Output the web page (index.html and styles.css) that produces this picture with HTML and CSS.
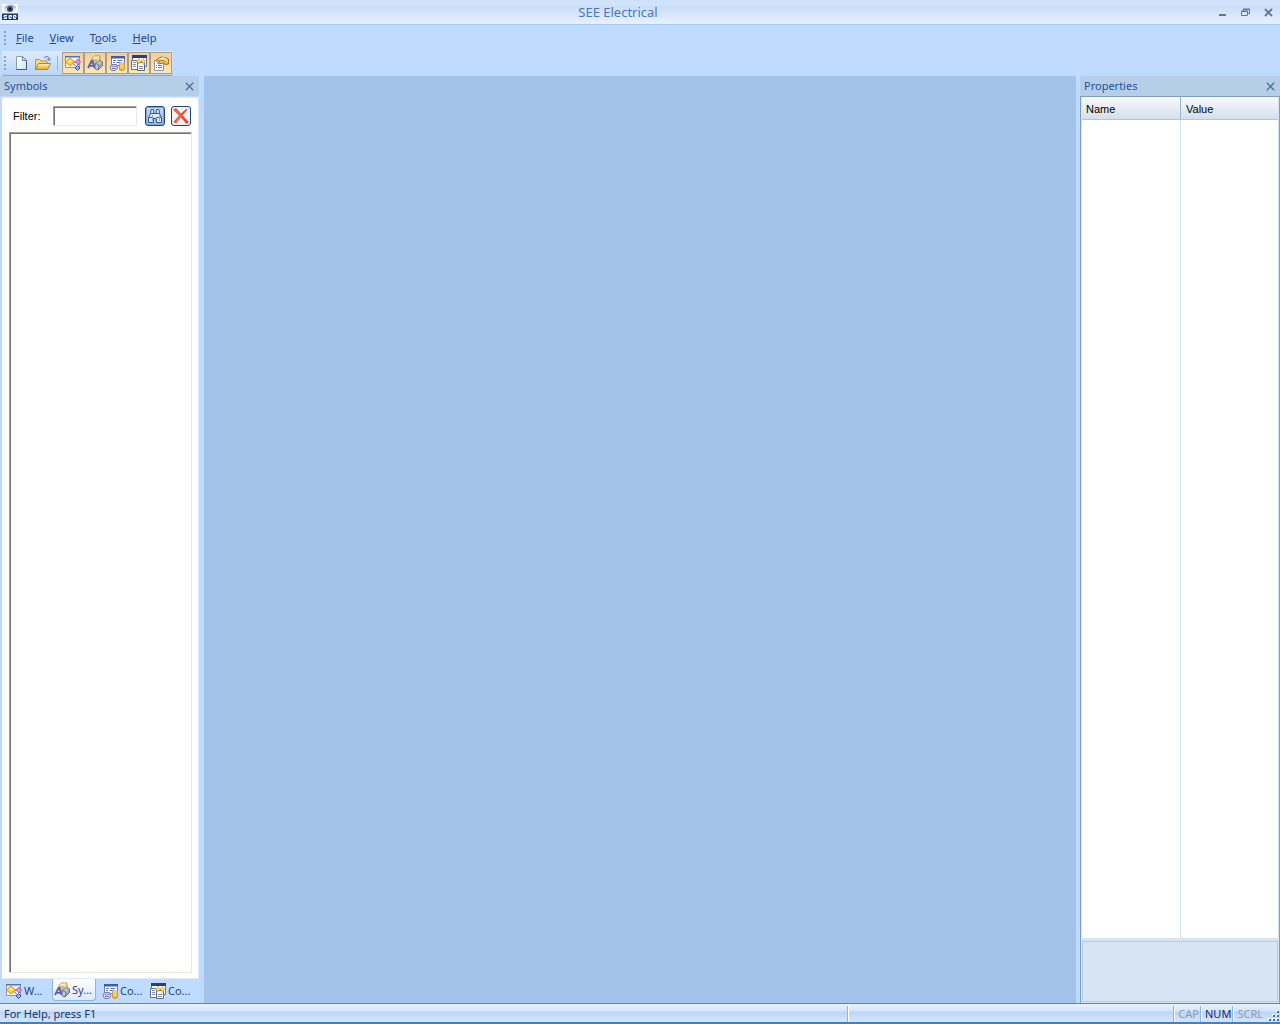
FILE: index.html
```html
<!DOCTYPE html>
<html lang="en">
<head>
<meta charset="utf-8">
<title>SEE Electrical</title>
<link rel="stylesheet" href="styles.css">
</head>
<body>
<svg class="sprite" aria-hidden="true">
  <defs>
    <linearGradient id="gold" x1="0" y1="0" x2="0" y2="1"><stop offset="0" stop-color="#fff3b0"/><stop offset="1" stop-color="#e5a92c"/></linearGradient>
    <linearGradient id="steel" x1="0" y1="0" x2="1" y2="1"><stop offset="0" stop-color="#f4f6fa"/><stop offset="1" stop-color="#6b7794"/></linearGradient>
    <linearGradient id="page" x1="0" y1="0" x2="1" y2="1"><stop offset="0" stop-color="#fff"/><stop offset="1" stop-color="#d5e2f5"/></linearGradient>
  </defs>
  <symbol id="i-workspace" viewBox="0 0 16 16">
    <path d="M.5 1.500h14v11H.5z" fill="#eef2fb" stroke="#8b98b5"/>
    <path d="M0 1h15v1.500H0z" fill="#5b75ab"/>
    <path d="M5 3 9.500 7 5 11 .5 7z" fill="#ffd235" stroke="#cf961f"/>
    <path d="M5 4.500 7.500 7H2.500z" fill="#fff0a0"/>
    <path d="M9 7h2M8 8.500l3 3" stroke="#52648f" fill="none"/>
    <path d="m13 4 2.500 3L13 10l-2.500-3z" fill="#ee8bea" stroke="#b05ab8"/>
    <path d="m12.500 10.500 2.500 2.500-2.500 2.500L10 13z" fill="#8cb3fa" stroke="#3a59b5"/>
  </symbol>
  <symbol id="i-symbols" viewBox="0 0 16 16">
    <path d="M5 3.500 7.500 1H13v5l-2.500 3H5z" fill="#efd98f" stroke="#a9924f"/>
    <path d="M5.500 4h5v4.500h-5z" fill="#cfbc83"/>
    <path d="M5.500 3.500 7.500 1.500h5l-2 2z" fill="#fff1b5"/>
    <path d="m8 9 4.500-3.500 3 1.500v3.500L11 15l-3-2z" fill="url(#steel)" stroke="#69748c"/>
    <ellipse cx="9.800" cy="11.800" rx="2" ry="3" fill="#c3cbd9" stroke="#6c778e"/>
    <path d="M1 13 4.500 6h1L7.500 13M2.500 10.800h4.300" fill="none" stroke="#5a5fb4" stroke-width="1.800"/>
  </symbol>
  <symbol id="i-commands" viewBox="0 0 16 16">
    <path d="M2.500 1.500h13v9h-13z" fill="#fff" stroke="#6e7fa9"/>
    <path d="M2 1h14v2.500H2z" fill="#3f5ea8"/>
    <path d="M4 5.500h3M8.500 5.500h5M4 7.500h2M7.500 7.500h4" stroke="#5576b5"/>
    <path d="M2.500 9.500h5l1 4-2 2h-4L1 12.500z" fill="#d3def6" stroke="#6a80b3"/>
    <path d="M3 11.500h4M3 13.500h4" stroke="#6a80b3"/>
    <path d="m4 9.500 2 2-2 2-2-2z" fill="#e394e0"/>
    <path d="M10.500 9v5c0 2 5 2 5 0V9z" fill="url(#gold)" stroke="#cf9630"/>
    <ellipse cx="13" cy="9" rx="2.500" ry="1.200" fill="#fff1a8" stroke="#d9a843"/>
  </symbol>
  <symbol id="i-components" viewBox="0 0 16 16">
    <path d="M1.500 1.500h14v10h-14z" fill="#fff" stroke="#6274a3"/>
    <path d="M1 0h15v3H1z" fill="#263d8d"/>
    <path d="M.5 5.500h6v9h-6z" fill="#fff" stroke="#5c7099"/>
    <path d="M2 7.500h3M2 9.500h3M2 11.500h3" stroke="#7c8fb0"/>
    <path d="M6.500 7.500h7v8h-7z" fill="#fdf8e2" stroke="#5c6789"/>
    <path d="M8 11.500h4M8 13.500h4" stroke="#7e8ba4"/>
    <path d="m8 3 1 2.500 2 .5-2 1-1 2-1-2-2-1 2-.5zM12.500 3l1 2.500 2 .5-2 1-1 2.500-1-2.500-2-1 2-.5z" fill="#ffe36c" stroke="#d7a526" stroke-width=".6"/>
  </symbol>
  <symbol id="i-properties" viewBox="0 0 16 16">
    <path d="M1.500 5.500h9v10h-9z" fill="#fff" stroke="#8a97b0"/>
    <path d="M3 10.500h1M5 10.500h4M3 12.500h1M5 12.500h4" stroke="#667fae"/>
    <path d="M2.500 5.500 8 2l4 .5L15.500 4v5l-3 .5L10 8 6 9 4.500 8 7 6H3z" fill="url(#gold)" stroke="#8f7233"/>
    <path d="M7 5.500h4l2 2" stroke="#a88433" fill="none"/>
    <path d="M8 3h4" stroke="#fff6c8"/>
  </symbol>
  <symbol id="i-close" viewBox="0 0 9 9"><path d="m.8.8 7.400 7.400M8.200.8.8 8.200" fill="none" stroke="currentColor" stroke-width="1.300"/></symbol>
</svg>

<header class="titlebar">
  <svg class="icon" viewBox="0 0 16 16" aria-hidden="true">
    <path d="M0 0h16v16H0z" fill="#f4f8fd"/>
    <path d="M2 4c2-4 10-5 12 0l-2 1-8 1z" fill="#a7b5cb"/>
    <path d="M2 6c2-3 8-5 12-1-2 4-9 5-12 1z" fill="#e6dce0"/>
    <circle cx="8" cy="5" r="3" fill="#3e5578"/><circle cx="8" cy="5" r="1.500" fill="#111c36"/>
    <path d="M0 9.500h16V16H0z" fill="#133d70"/>
    <path d="M5 11.500H2v1.500h2.500v1.500H1.500M9.500 14.500H7v-3h2.500v1.500H7M14 14.500h-2.500v-3H14v1.500h-2.500" fill="none" stroke="#fff"/>
  </svg>
  <h1>SEE Electrical</h1>
  <div class="window-buttons">
    <button aria-label="Minimize"><svg width="9" height="9" viewBox="0 0 9 9"><path d="M1 6h7v2H1z" fill="#66758d"/></svg></button>
    <button aria-label="Restore"><svg width="9" height="9" viewBox="0 0 9 9"><path d="M2.500 3V1.500h6v4H7M.5 3.500h6v4h-6zM2 1h7M0 3h7" fill="none" stroke="#66758d"/></svg></button>
    <button aria-label="Close"><svg width="9" height="9" viewBox="0 0 9 9"><path d="m1 1 7 7M8 1 1 8" stroke="#66758d" stroke-width="1.800"/></svg></button>
  </div>
</header>

<nav class="menubar" aria-label="Main menu">
  <span class="grip"></span>
  <button><u>F</u>ile</button>
  <button><u>V</u>iew</button>
  <button>T<u>o</u>ols</button>
  <button><u>H</u>elp</button>
</nav>

<div class="toolbar-row">
  <div class="toolbar" role="toolbar" aria-label="Standard">
    <span class="grip"></span>
    <button class="tool" aria-label="New"><svg class="icon" viewBox="0 0 16 16"><path d="M3.500 1.500h6l4 4v9h-10z" fill="url(#page)" stroke="#8b9ab6"/><path d="M13.500 5.500v9h-10" fill="none" stroke="#43557d"/><path d="M9.500 1.500v4h4z" fill="#dbe5f5" stroke="#6d7fa3"/></svg></button>
    <button class="tool" aria-label="Open"><svg class="icon" viewBox="0 0 16 16"><path d="M.5 14.500v-10h4l1.500 1.500h6v8z" fill="#f9da75" stroke="#b8954a"/><path d="m.5 14.500 3-6h12l-3 6z" fill="url(#gold)" stroke="#b08634"/><path d="M9 3c2-2 4-2 5 0v2m-2-1.500 2 2 1.500-2" fill="none" stroke="#5470a0"/></svg></button>
    <span class="separator"></span>
    <button class="tool on" aria-label="Workspace" aria-pressed="true"><svg class="icon"><use href="#i-workspace"/></svg></button>
    <button class="tool on" aria-label="Symbols" aria-pressed="true"><svg class="icon"><use href="#i-symbols"/></svg></button>
    <button class="tool on" aria-label="Commands" aria-pressed="true"><svg class="icon"><use href="#i-commands"/></svg></button>
    <button class="tool on" aria-label="Components" aria-pressed="true"><svg class="icon"><use href="#i-components"/></svg></button>
    <button class="tool on" aria-label="Properties" aria-pressed="true"><svg class="icon"><use href="#i-properties"/></svg></button>
  </div>
</div>

<div class="workarea">
  <aside class="symbols">
    <div class="panel-title"><h2>Symbols</h2><button aria-label="Close Symbols"><svg width="9" height="9"><use href="#i-close"/></svg></button></div>
    <div class="symbols-body">
      <form class="filter">
        <label for="filter">Filter:</label>
        <input id="filter" type="text">
        <button type="button" class="find" aria-label="Find"><svg class="icon" viewBox="0 0 16 16"><path d="M4 1.500h2.500l.5 4h2l.5-4H12l.5 4 2 4v5H9.500v-4h-3v4h-5v-5l2-4z" fill="#dce8fa" stroke="#3d5a8e"/><path d="M3.500 5.500H7M9 5.500h3.500M2 9.500h4.500M9.500 9.500h5" stroke="#3d5a8e"/><path d="M5.500 7v6M12.500 7v6" stroke="#8ba6d2"/></svg></button>
        <button type="button" class="clear" aria-label="Clear"><svg class="icon" viewBox="0 0 16 16"><path d="M0 1.500 3 0l5 5.500L13 1l1.500.5L9.500 7.500 16 14l-2.500 2L8 9.500 3 15.500.5 14 6 7.500z" fill="#e84a32"/><path d="m2 1.500 6 6L2.500 14" fill="none" stroke="#f8917b"/></svg></button>
      </form>
      <div class="symbol-list" role="tree" aria-label="Symbols"></div>
    </div>
    <div class="tabs" role="tablist">
      <button role="tab"><svg class="icon"><use href="#i-workspace"/></svg><span>W...</span></button>
      <button role="tab" aria-selected="true"><svg class="icon"><use href="#i-symbols"/></svg><span>Sy...</span></button>
      <button role="tab"><svg class="icon"><use href="#i-commands"/></svg><span>Co...</span></button>
      <button role="tab"><svg class="icon"><use href="#i-components"/></svg><span>Co...</span></button>
    </div>
  </aside>

  <main class="canvas"></main>

  <aside class="properties">
    <div class="panel-title"><h2>Properties</h2><button aria-label="Close Properties"><svg width="9" height="9"><use href="#i-close"/></svg></button></div>
    <div class="property-body">
      <table>
        <thead><tr><th>Name</th><th>Value</th></tr></thead>
        <tbody><tr><td></td><td></td></tr></tbody>
      </table>
      <div class="description"></div>
    </div>
  </aside>
</div>

<footer class="statusbar">
  <span class="message">For Help, press F1</span>
  <span class="blank"></span>
  <span class="key">CAP</span>
  <span class="key num">NUM</span>
  <span class="key">SCRL</span>
  <svg class="resize" width="12" height="12" viewBox="0 0 12 12" aria-hidden="true"><path d="M8 0h2v2H8zM4 4h2v2H4zM8 4h2v2H8zM0 8h2v2H0zM4 8h2v2H4zM8 8h2v2H8z" fill="#fff"/><path d="M9 1h2v2H9zM5 5h2v2H5zM9 5h2v2H9zM1 9h2v2H1zM5 9h2v2H5zM9 9h2v2H9z" fill="#426eac"/></svg>
</footer>
</body>
</html>
```
FILE: styles.css
```css
* { box-sizing: border-box; }

body {
  margin: 0;
  height: 100vh;
  display: flex;
  flex-direction: column;
  overflow: hidden;
  background: #bfdbff;
  color: #24458a;
  font: 11px/16px "Noto Sans", "Open Sans", sans-serif;
}

button {
  margin: 0;
  padding: 0;
  border: 0;
  background: none;
  color: inherit;
  font: inherit;
}

svg { display: block; }
h1, h2 { margin: 0; font-size: 11px; font-weight: 400; }

.sprite { position: absolute; width: 0; height: 0; }
.icon { width: 16px; height: 16px; flex: none; }

/* Title and menus */
.titlebar {
  flex: none;
  height: 25px;
  display: flex;
  align-items: center;
  padding: 0 7px 0 2px;
  background: linear-gradient(#cfe2fb 0, #d3e4fa 5px, #cadef7 6px, #e6f0fd 23px);
  border-bottom: 1px solid #a7cbf0;
}
.titlebar h1 { flex: 1; font-size: 13px; text-align: center; color: #4a78b8; }
.window-buttons { display: flex; gap: 14px; }

.menubar {
  flex: none;
  height: 26px;
  display: flex;
  align-items: center;
  padding-left: 4px;
}
.menubar button { padding: 0 8px; }
.menubar .grip { margin-right: 2px; }

.grip {
  width: 2px;
  height: 14px;
  background: repeating-linear-gradient(#7da5db 0 2px, transparent 2px 4px);
}

.toolbar-row { flex: none; height: 25px; }
.toolbar {
  width: max-content;
  height: 25px;
  margin-left: 2px;
  padding: 0 1px 0 2px;
  display: flex;
  align-items: center;
  background: linear-gradient(#dceafc, #cbe0fb 50%, #bad5f8);
  border-bottom: 1px solid #7aa6dc;
  border-radius: 2px;
}
.tool { width: 22px; height: 22px; display: grid; place-items: center; }
.toolbar .grip { margin-right: 4px; }
.separator { width: 1px; height: 14px; margin: 0 4px 0 3px; background: #8fb5e5; }
.tool.on {
  border: 1px solid #a99e8c;
  background: linear-gradient(#f4cd9a, #fbd7a2 45%, #fde8b4);
}

/* Docked panels */
.workarea {
  flex: 1;
  min-height: 0;
  display: grid;
  grid-template-columns: 204px 1fr 204px;
}
.canvas { background: #a3c3ea; }

.panel-title {
  flex: none;
  height: 20px;
  display: flex;
  align-items: center;
  justify-content: space-between;
  padding: 0 5px 0 4px;
  background: #b7cee9;
  color: #25519b;
}
.panel-title button { color: #4a719f; }

.symbols { display: flex; flex-direction: column; padding-right: 5px; }
.symbols-body {
  flex: 1;
  display: flex;
  flex-direction: column;
  gap: 6px;
  margin: 1px 0 0 2px;
  padding: 8px 6px 5px 7px;
  background: #fff;
  border: 1px solid #dce9fa;
  border-left: 0;
}
.filter {
  display: flex;
  align-items: center;
  color: #000;
  font-family: "Liberation Sans", sans-serif;
  font-size: 11px;
}
.filter label { width: 44px; padding-left: 4px; }
.filter input {
  width: 84px;
  height: 20px;
  margin-right: 8px;
  padding: 0 4px;
  outline: 0;
  font: inherit;
}
.filter input,
.symbol-list {
  border: 1px solid #ece9dc;
  border-top-color: #a5a294;
  border-left-color: #a5a294;
  box-shadow: inset 1px 1px #75736a;
}
.filter button {
  width: 20px;
  height: 20px;
  display: grid;
  place-items: center;
  border: 1px solid #1e4679;
  border-radius: 3px;
}
.find { background: linear-gradient(#c5dafa, #8eb2ea); box-shadow: inset 0 0 0 1px #7fa4df; }
.filter .clear { margin-left: 6px; background: #f1f2f5; }
.symbol-list { flex: 1; }

.tabs { flex: none; height: 24px; display: flex; gap: 4px; padding-left: 4px; }
.tabs button {
  width: 44px;
  height: 22px;
  display: flex;
  align-items: center;
  gap: 2px;
  padding: 1px 0 0 2px;
  white-space: nowrap;
}
.tabs [aria-selected="true"] {
  padding-left: 1px;
  background: linear-gradient(#fff, #dceafc);
  border: 1px solid #8db5e6;
  border-top: 0;
  border-radius: 0 0 4px 4px;
}

.properties { display: flex; flex-direction: column; padding-left: 4px; }
.property-body {
  flex: 1;
  display: flex;
  flex-direction: column;
  padding: 0 1px 1px;
  border: 1px solid #7d9ebd;
  border-bottom: 0;
  background: #d6e4f3;
}
.property-body table {
  flex: 1;
  width: 100%;
  display: flex;
  flex-direction: column;
  background: #fff;
  color: #000;
  font-family: "Liberation Sans", sans-serif;
}
.property-body tbody { flex: 1; display: flex; }
.property-body tr { flex: 1; display: grid; grid-template-columns: 1fr 1fr; }
.property-body th {
  height: 23px;
  padding: 4px;
  font-weight: 400;
  text-align: left;
  background: linear-gradient(#f8fafc, #d4dfeb);
  border-bottom: 1px solid #b4c6d8;
}
.property-body th + th { padding-left: 5px; border-left: 1px solid #9db4ca; }
.property-body td { padding: 0; }
.property-body td + td { border-left: 1px solid #d6e3f0; }
.description { flex: none; height: 61px; margin-top: 3px; border: 1px solid #b5cde6; }

/* Status bar */
.statusbar {
  flex: none;
  height: 21px;
  display: flex;
  align-items: center;
  padding-top: 1px;
  border-top: 1px solid #5386c4;
  border-bottom: 2px solid #3f7fd0;
  background: linear-gradient(#e8f2fe 0, #d4e5fb 7px, #bcd5f6 8px, #d3e6ff);
  color: #15336f;
}
.message { flex: 1; padding-left: 4px; }
.blank { width: 326px; height: 16px; border-left: 1px solid #8eb3de; box-shadow: inset 1px 0 #fff; }
.key {
  height: 16px;
  padding: 0 1px 0 4px;
  color: #8c9bb5;
  border-left: 1px solid #8eb3de;
  box-shadow: inset 1px 0 #fff;
}
.num { color: #15246b; }
.resize { align-self: flex-end; margin-left: 4px; }
```
